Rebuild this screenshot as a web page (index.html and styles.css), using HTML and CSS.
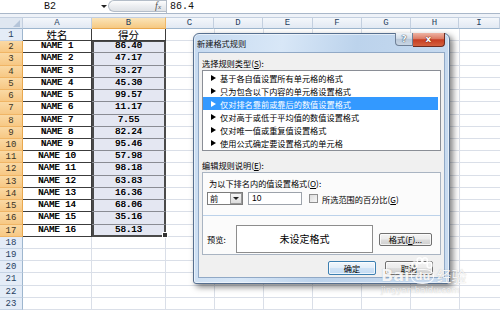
FILE: index.html
```html
<!DOCTYPE html>
<html>
<head>
<meta charset="utf-8">
<link rel="stylesheet" href="styles.css">
</head>
<body>
<div class="fbar">
  <div class="namebox">B2</div>
  <div class="nb-arrow"><span class="tri"></span></div>
  <div class="fxbtn"><span class="fx">f<span class="fx-x">x</span></span></div>
  <div class="formula">86.4</div>
</div>
<div class="strip"></div>
<div class="sheet">
  <div class="hrow">
    <div class="ch w0 corner"><span class="corner-tri"></span></div>
    <div class="ch wA">A</div>
    <div class="ch wB sel">B</div>
    <div class="ch wC">C</div>
    <div class="ch wD">D</div>
    <div class="ch wE">E</div>
    <div class="ch wF">F</div>
    <div class="ch wG">G</div>
    <div class="ch wH">H</div>
    <div class="ch wI">I</div>
  </div>
  <div class="row t"><div class="rh">1</div><div class="cell a cjk">姓名</div><div class="cell b hd cjk">得分</div><div class="rest"></div></div>
  <div class="row t"><div class="rh sel">2</div><div class="cell a">NAME 1</div><div class="cell b s first">86.40</div><div class="rest"></div></div>
  <div class="row t"><div class="rh sel">3</div><div class="cell a">NAME 2</div><div class="cell b s">47.17</div><div class="rest"></div></div>
  <div class="row t"><div class="rh sel">4</div><div class="cell a">NAME 3</div><div class="cell b s">53.27</div><div class="rest"></div></div>
  <div class="row t"><div class="rh sel">5</div><div class="cell a">NAME 4</div><div class="cell b s">45.30</div><div class="rest"></div></div>
  <div class="row t"><div class="rh sel">6</div><div class="cell a">NAME 5</div><div class="cell b s">99.57</div><div class="rest"></div></div>
  <div class="row t"><div class="rh sel">7</div><div class="cell a">NAME 6</div><div class="cell b s">11.17</div><div class="rest"></div></div>
  <div class="row t"><div class="rh sel">8</div><div class="cell a">NAME 7</div><div class="cell b s">7.55</div><div class="rest"></div></div>
  <div class="row t"><div class="rh sel">9</div><div class="cell a">NAME 8</div><div class="cell b s">82.24</div><div class="rest"></div></div>
  <div class="row t"><div class="rh sel">10</div><div class="cell a">NAME 9</div><div class="cell b s">95.46</div><div class="rest"></div></div>
  <div class="row t"><div class="rh sel">11</div><div class="cell a">NAME 10</div><div class="cell b s">57.98</div><div class="rest"></div></div>
  <div class="row t"><div class="rh sel">12</div><div class="cell a">NAME 11</div><div class="cell b s">98.18</div><div class="rest"></div></div>
  <div class="row t"><div class="rh sel">13</div><div class="cell a">NAME 12</div><div class="cell b s">63.83</div><div class="rest"></div></div>
  <div class="row t"><div class="rh sel">14</div><div class="cell a">NAME 13</div><div class="cell b s">16.36</div><div class="rest"></div></div>
  <div class="row t"><div class="rh sel">15</div><div class="cell a">NAME 14</div><div class="cell b s">68.06</div><div class="rest"></div></div>
  <div class="row t"><div class="rh sel">16</div><div class="cell a">NAME 15</div><div class="cell b s">35.16</div><div class="rest"></div></div>
  <div class="row t"><div class="rh sel">17</div><div class="cell a">NAME 16</div><div class="cell b s last">58.13</div><div class="rest"></div></div>
  <div class="row"><div class="rh">18</div><div class="cell a"></div><div class="cell b"></div><div class="rest"></div></div>
  <div class="row"><div class="rh">19</div><div class="cell a"></div><div class="cell b"></div><div class="rest"></div></div>
  <div class="row"><div class="rh">20</div><div class="cell a"></div><div class="cell b"></div><div class="rest"></div></div>
  <div class="row"><div class="rh">21</div><div class="cell a"></div><div class="cell b"></div><div class="rest"></div></div>
  <div class="row"><div class="rh">22</div><div class="cell a"></div><div class="cell b"></div><div class="rest"></div></div>
  <div class="row"><div class="rh">23</div><div class="cell a"></div><div class="cell b"></div><div class="rest"></div></div>
</div>

<div class="dialog">
  <div class="titlebar">
    <div class="title">新建格式规则</div>
    <div class="tb-buttons">
      <div class="tb-help">?</div>
      <div class="tb-close">x</div>
    </div>
  </div>
  <div class="client">
    <div class="label1">选择规则类型(<u>S</u>):</div>
    <div class="listbox">
      <div class="item"><span class="arrow"></span>基于各自值设置所有单元格的格式</div>
      <div class="item"><span class="arrow"></span>只为包含以下内容的单元格设置格式</div>
      <div class="item on"><span class="arrow"></span>仅对排名靠前或靠后的数值设置格式</div>
      <div class="item"><span class="arrow"></span>仅对高于或低于平均值的数值设置格式</div>
      <div class="item"><span class="arrow"></span>仅对唯一值或重复值设置格式</div>
      <div class="item"><span class="arrow"></span>使用公式确定要设置格式的单元格</div>
    </div>
    <div class="label2">编辑规则说明(<u>E</u>):</div>
    <div class="box2">
      <div class="box2-top">
        <div class="label3">为以下排名内的值设置格式(<u>O</u>):</div>
        <div class="controls">
          <div class="combo"><span class="combo-text">前</span><span class="combo-btn"><span class="tri"></span></span></div>
          <div class="textbox">10</div>
          <div class="checkbox"></div>
          <div class="chk-label">所选范围的百分比(<u>G</u>)</div>
        </div>
      </div>
      <div class="box2-bottom">
        <div class="pv-label">预览:</div>
        <div class="pv-box">未设定格式</div>
        <div class="btn fmt">格式(<u>F</u>)...</div>
      </div>
    </div>
    <div class="buttons">
      <div class="btn ok">确定</div>
      <div class="btn cancel">取消</div>
    </div>
  </div>
</div>

<div class="watermark">
  <div class="wm-line">
    <span class="wm-bai">Bai</span>
    <span class="wm-paw">
      <svg width="22" height="12" viewBox="0 0 22 12">
        <g fill="none" stroke="rgba(255,255,255,0.9)" stroke-width="1.6">
          <ellipse cx="3.5" cy="8" rx="2.4" ry="3"/>
          <ellipse cx="8.5" cy="3.6" rx="2.4" ry="2.8"/>
          <ellipse cx="14" cy="3.6" rx="2.4" ry="2.8"/>
          <ellipse cx="18.5" cy="8" rx="2.4" ry="3"/>
        </g>
      </svg>
      <span class="wm-du">du</span>
    </span>
    <span class="wm-jy">经验</span>
  </div>
  <div class="wm-url">jingyan.baidu.com</div>
</div>
</body>
</html>
```
FILE: styles.css
```css
* { box-sizing: border-box; margin: 0; padding: 0; }

body {
  width: 500px;
  height: 311px;
  overflow: hidden;
  background: #ffffff;
  font-family: "Liberation Mono", monospace;
  position: relative;
  color: #000;
}

/* ---------- formula bar ---------- */
.fbar {
  display: flex;
  height: 14px;
  border-bottom: 1px solid #a9b7c9;
  background: #fff;
}
.namebox {
  width: 100px;
  text-align: center;
  font-size: 10px;
  line-height: 13px;
  color: #111;
}
.nb-arrow {
  width: 7px;
  display: flex;
  align-items: center;
  justify-content: center;
}
.tri {
  width: 0;
  height: 0;
  border-left: 3px solid transparent;
  border-right: 3px solid transparent;
  border-top: 3px solid #222;
}
.fxbtn {
  width: 58px;
  height: 12px;
  margin-left: 1px;
  border: 1px solid #b4bdc8;
  border-right: none;
  border-radius: 6px 0 0 6px;
  background: linear-gradient(#fdfdfd, #eceef1 50%, #dfe2e6);
  display: flex;
  justify-content: flex-end;
  align-items: center;
  padding-right: 5px;
}
.fx {
  font-family: "Liberation Serif", serif;
  font-style: italic;
  font-size: 10px;
  color: #555;
  line-height: 10px;
}
.fx-x { font-size: 7px; }
.formula {
  flex: 1;
  border-left: 1px solid #b4bdc8;
  padding-left: 3px;
  font-size: 10px;
  line-height: 13px;
  color: #111;
}
.strip {
  height: 3px;
  background: #eef2f8;
}

/* ---------- sheet ---------- */
.sheet {
  display: flex;
  flex-direction: column;
}
.hrow {
  display: flex;
  height: 12px;
}
.ch {
  flex: none;
  border-right: 1px solid #c3cfdf;
  border-bottom: 1px solid #9eb6ce;
  border-top: 1px solid #c3cfdf;
  background: linear-gradient(#f4f7fb, #e2e9f3);
  font-size: 9px;
  color: #27415f;
  text-align: center;
  line-height: 10px;
}
.ch.sel {
  background: linear-gradient(#fbe4b8, #f6c982);
  border-right-color: #f0b868;
  border-bottom-color: #e9a84e;
}
.corner {
  position: relative;
  background: #dfe7f1;
}
.corner-tri {
  position: absolute;
  right: 2px;
  bottom: 1px;
  width: 0;
  height: 0;
  border-left: 7px solid transparent;
  border-bottom: 7px solid #b5c5d9;
}
.w0 { width: 23px; }
.wA { width: 69px; }
.wB { width: 74px; }
.wC { width: 48px; }
.wD { width: 49px; }
.wE { width: 50px; }
.wF { width: 49px; }
.wG { width: 49px; }
.wH { width: 48px; }
.wI { flex: 1; }

.row {
  display: flex;
  height: 12.22px;
}
.rh {
  flex: none;
  width: 23px;
  background: #e4ecf7;
  border-right: 1px solid #9eb6ce;
  border-bottom: 1px solid #c5d3e4;
  font-size: 9px;
  color: #27415f;
  text-align: center;
  line-height: 12px;
}
.rh.sel {
  background: linear-gradient(#fad9a4, #f7c884);
  border-right-color: #e9a84e;
  border-bottom-color: #f0b565;
  color: #3c3424;
}
.cell {
  flex: none;
  border-right: 1px solid #dadfe8;
  border-bottom: 1px solid #dadfe8;
  font-size: 9px;
  text-align: center;
  line-height: 11.5px;
  color: #000;
  text-shadow: 0.35px 0 0 #000;
  white-space: nowrap;
}
.cell.a { width: 69px; }
.cell.b { width: 74px; }
.cell.cjk {
  font-family: "Noto Sans CJK SC", sans-serif;
  font-size: 10.5px;
  line-height: 12px;
  text-shadow: none;
}
.t .cell {
  border-color: #3c3c3c;
}
.cell.s {
  position: relative;
  background: #e4e7f2;
  border-bottom-color: #8a8c94;
  border-right-color: #4a4a4a;
  box-shadow: inset 2px 0 #4a4a4a, inset -1px 0 #4a4a4a;
}
.cell.s.first {
  box-shadow: inset 2px 0 #4a4a4a, inset -1px 0 #4a4a4a, inset 0 1px #4a4a4a;
}
.cell.s.last {
  border-bottom: 2px solid #4a4a4a;
}
.cell.s.last::after {
  content: "";
  position: absolute;
  right: -3px;
  bottom: -3px;
  width: 4px;
  height: 4px;
  background: #333;
  border: 1px solid #fff;
}
.rest {
  flex: 1;
  border-bottom: 1px solid #dadfe8;
  background: repeating-linear-gradient(to right, transparent 0 48px, #dadfe8 48px 49px);
}

/* ---------- dialog ---------- */
.dialog {
  position: absolute;
  left: 193px;
  top: 33px;
  width: 257px;
  height: 251px;
  border: 1px solid #566f8f;
  border-radius: 6px 6px 3px 3px;
  background: linear-gradient(100deg, #c6daf0 0%, #d8e7f7 30%, #bcd3ec 55%, #cadcf0 100%);
  box-shadow: 3px 3px 6px rgba(0, 0, 0, 0.5), inset 0 0 0 1px rgba(255, 255, 255, 0.55);
  display: flex;
  flex-direction: column;
  padding: 0 4px 5px 4px;
  font-family: "Noto Sans CJK SC", sans-serif;
  font-size: 8.2px;
  color: #000;
}
.titlebar {
  height: 18px;
  display: flex;
  flex: none;
}
.title {
  line-height: 19px;
  margin-left: -1px;
  color: #111;
}
.tb-buttons {
  margin-left: auto;
  display: flex;
  align-self: flex-start;
  margin-top: -1px;
}
.tb-help {
  width: 18px;
  height: 13px;
  border: 1px solid #6f8097;
  border-top: none;
  border-radius: 0 0 0 4px;
  background: linear-gradient(#eef3f8, #d3dde8 45%, #b8c7d8 50%, #c9d6e4);
  color: #f8fafc;
  font-family: "DejaVu Sans", sans-serif;
  font-weight: bold;
  font-size: 9px;
  line-height: 12px;
  text-align: center;
  text-shadow: 0 0 1px #2a3d55, 0 0 1px #2a3d55;
}
.tb-close {
  width: 32px;
  height: 14px;
  border: 1px solid #6d2b1f;
  border-top: none;
  border-left: none;
  border-radius: 0 0 4px 0;
  background: linear-gradient(#eeb4a4, #dc7a63 45%, #c63d22 52%, #d4613f);
  color: #fff;
  font-family: "DejaVu Sans", sans-serif;
  font-weight: bold;
  font-size: 9px;
  line-height: 12px;
  text-align: center;
  text-shadow: 0 0 1px #5a1a10, 0 0 1px #5a1a10;
}
.client {
  flex: 1;
  background: #f0f0f0;
  border: 1px solid #91a9c6;
  padding: 4px 3px 0 3px;
  display: flex;
  flex-direction: column;
}
.label1, .label2 {
  line-height: 12px;
  height: 12px;
}
.label1 { margin-bottom: 1px; }
.listbox {
  height: 81px;
  border: 1px solid #8a8e96;
  background: #fff;
  padding: 0 2px 0 0;
}
.item {
  height: 13px;
  display: flex;
  align-items: center;
  padding-left: 8px;
  white-space: nowrap;
}
.arrow {
  width: 0;
  height: 0;
  border-top: 3px solid transparent;
  border-bottom: 3px solid transparent;
  border-left: 5px solid #000;
  margin-right: 4px;
}
.item.on {
  background: #3399ff;
  color: #fff;
}
.item.on .arrow { border-left-color: #fff; }
.label2 {
  margin-top: 8px;
  margin-bottom: 1px;
}
.box2 {
  height: 83px;
  border: 1px solid #a9b4c2;
  background: #fbfbfb;
  display: flex;
  flex-direction: column;
}
.box2-top {
  height: 43px;
  border-bottom: 1px solid #bcd2ea;
  padding: 4px 4px 0 4px;
}
.label3 {
  line-height: 12px;
  padding-left: 2px;
}
.controls {
  display: flex;
  align-items: center;
  margin-top: 3px;
  height: 13px;
}
.combo {
  width: 36px;
  height: 13px;
  border: 1px solid #7c7c7c;
  background: #fff;
  display: flex;
  align-items: center;
  justify-content: space-between;
}
.combo-text {
  padding-left: 2px;
  line-height: 11px;
}
.combo-btn {
  width: 12px;
  height: 11px;
  border: 1px solid #9a9a9a;
  background: linear-gradient(#f6f6f6, #dcdcdc);
  display: flex;
  align-items: center;
  justify-content: center;
}
.textbox {
  margin-left: 5px;
  width: 54px;
  height: 13px;
  border: 1px solid #9da3ab;
  background: #fff;
  padding-left: 3px;
  line-height: 11px;
  font-family: "Liberation Sans", sans-serif;
  font-size: 8.5px;
}
.checkbox {
  margin-left: 7px;
  width: 9px;
  height: 9px;
  border: 1px solid #8f8f8f;
  background: linear-gradient(135deg, #dcdcdc, #f7f7f7);
}
.chk-label {
  margin-left: 4px;
  line-height: 12px;
}
.box2-bottom {
  flex: 1;
  display: flex;
  align-items: center;
  padding: 9px 4px 1px 4px;
}
.pv-label {
  width: 29px;
  padding-left: 0;
}
.pv-box {
  width: 137px;
  height: 28px;
  border: 1px solid #8d8d8d;
  background: #fff;
  font-size: 10px;
  text-align: center;
  line-height: 26px;
}
.btn {
  height: 14px;
  border: 1px solid #707070;
  border-radius: 2px;
  background: linear-gradient(#f3f3f3, #ebebeb 48%, #dddddd 52%, #cfcfcf);
  text-align: center;
  line-height: 12px;
  box-shadow: inset 0 0 0 1px rgba(255, 255, 255, 0.7);
}
.btn.fmt {
  margin-left: 6px;
  width: 53px;
  height: 13px;
  line-height: 11px;
}
.buttons {
  display: flex;
  justify-content: flex-end;
  margin-top: 6px;
  padding-right: 8px;
}
.btn.ok, .btn.cancel { width: 48px; }
.btn.ok {
  border-color: #3c7fb1;
  background: linear-gradient(#f1f7fd, #e3eef9 48%, #d0e3f6 52%, #c3dbf3);
}
.btn.cancel { margin-left: 9px; }

/* ---------- watermark ---------- */
.watermark {
  position: absolute;
  left: 381px;
  top: 258px;
  color: rgba(255, 255, 255, 0.88);
  text-shadow: 0 0 1px rgba(80, 80, 80, 0.35);
}
.wm-line {
  display: flex;
  align-items: flex-end;
  height: 26px;
}
.wm-bai {
  font-family: "DejaVu Sans", sans-serif;
  font-weight: bold;
  font-size: 16px;
  line-height: 16px;
}
.wm-paw {
  display: flex;
  flex-direction: column;
  align-items: center;
  width: 24px;
  margin-left: 1px;
}
.wm-du {
  font-family: "DejaVu Sans", sans-serif;
  font-weight: bold;
  font-size: 11px;
  line-height: 13px;
  padding: 0 3px;
  border: 1.5px solid rgba(255, 255, 255, 0.85);
  border-radius: 40% 40% 45% 45%;
}
.wm-jy {
  font-family: "Noto Sans CJK SC", sans-serif;
  font-size: 15px;
  line-height: 16px;
  margin-left: 2px;
}
.wm-url {
  font-family: "DejaVu Sans", sans-serif;
  font-size: 8.5px;
  line-height: 10px;
  margin-top: 1px;
  color: rgba(255, 255, 255, 0.8);
}
```
